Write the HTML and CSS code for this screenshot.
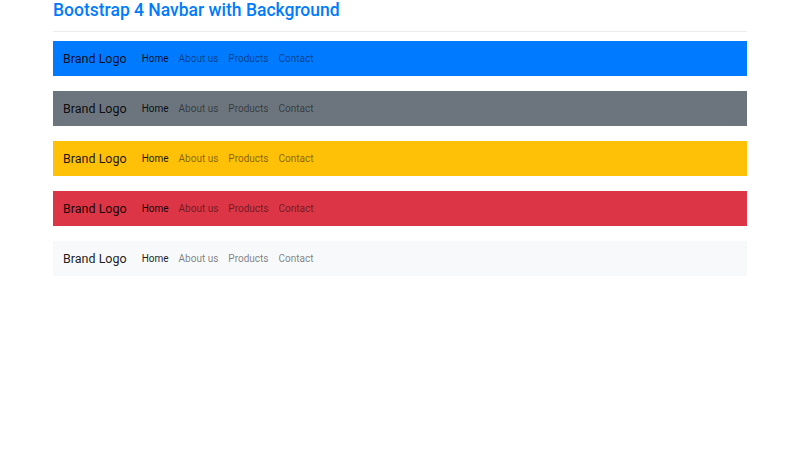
FILE: index.html
```html
<!DOCTYPE html>
<html>
<head>
<meta charset="utf-8">
<link rel="stylesheet" href="styles.css">
</head>
<body>
<div class="container">
  <h3 class="title">Bootstrap 4 Navbar with Background</h3>
  <hr class="rule">
  <nav class="navbar bg-primary">
    <a class="brand">Brand Logo</a>
    <ul class="nav"><li class="link active">Home</li><li class="link">About us</li><li class="link">Products</li><li class="link">Contact</li></ul>
  </nav>
  <nav class="navbar bg-secondary">
    <a class="brand">Brand Logo</a>
    <ul class="nav"><li class="link active">Home</li><li class="link">About us</li><li class="link">Products</li><li class="link">Contact</li></ul>
  </nav>
  <nav class="navbar bg-warning">
    <a class="brand">Brand Logo</a>
    <ul class="nav"><li class="link active">Home</li><li class="link">About us</li><li class="link">Products</li><li class="link">Contact</li></ul>
  </nav>
  <nav class="navbar bg-danger">
    <a class="brand">Brand Logo</a>
    <ul class="nav"><li class="link active">Home</li><li class="link">About us</li><li class="link">Products</li><li class="link">Contact</li></ul>
  </nav>
  <nav class="navbar bg-light">
    <a class="brand">Brand Logo</a>
    <ul class="nav"><li class="link active">Home</li><li class="link">About us</li><li class="link">Products</li><li class="link">Contact</li></ul>
  </nav>
</div>
</body>
</html>
```
FILE: styles.css
```css
html, body {
  margin: 0;
  padding: 0;
  background: #fff;
}
body {
  font-family: Roboto, "Liberation Sans", sans-serif;
  font-size: 10px;
  line-height: 1.5;
  color: #212529;
}
.container {
  width: 694px;
  margin: 0 auto;
  padding: 0;
}
.title {
  margin: 0 0 5px;
  font-size: 17.5px;
  font-weight: 500;
  line-height: 1.2;
  color: #007bff;
}
.rule {
  margin: 10px 0 9px;
  border: 0;
  border-top: 1px solid rgba(0,0,0,.07);
  height: 0;
}
.navbar {
  display: flex;
  align-items: center;
  padding: 5px 10px;
  margin-bottom: 15px;
}
.brand {
  font-size: 12.5px;
  line-height: 1.5;
  padding: 4px 0 2.25px;
  margin-right: 10px;
  color: rgba(0,0,0,.9);
}
.nav {
  display: flex;
  list-style: none;
  margin: 0;
  padding: 0;
}
.link {
  padding: 5px;
  color: rgba(0,0,0,.5);
}
.link.active {
  color: rgba(0,0,0,.9);
}
.bg-primary { background: #007bff; }
.bg-secondary { background: #6c757d; }
.bg-warning { background: #ffc107; }
.bg-danger { background: #dc3545; }
.bg-light { background: #f8f9fa; }
```
